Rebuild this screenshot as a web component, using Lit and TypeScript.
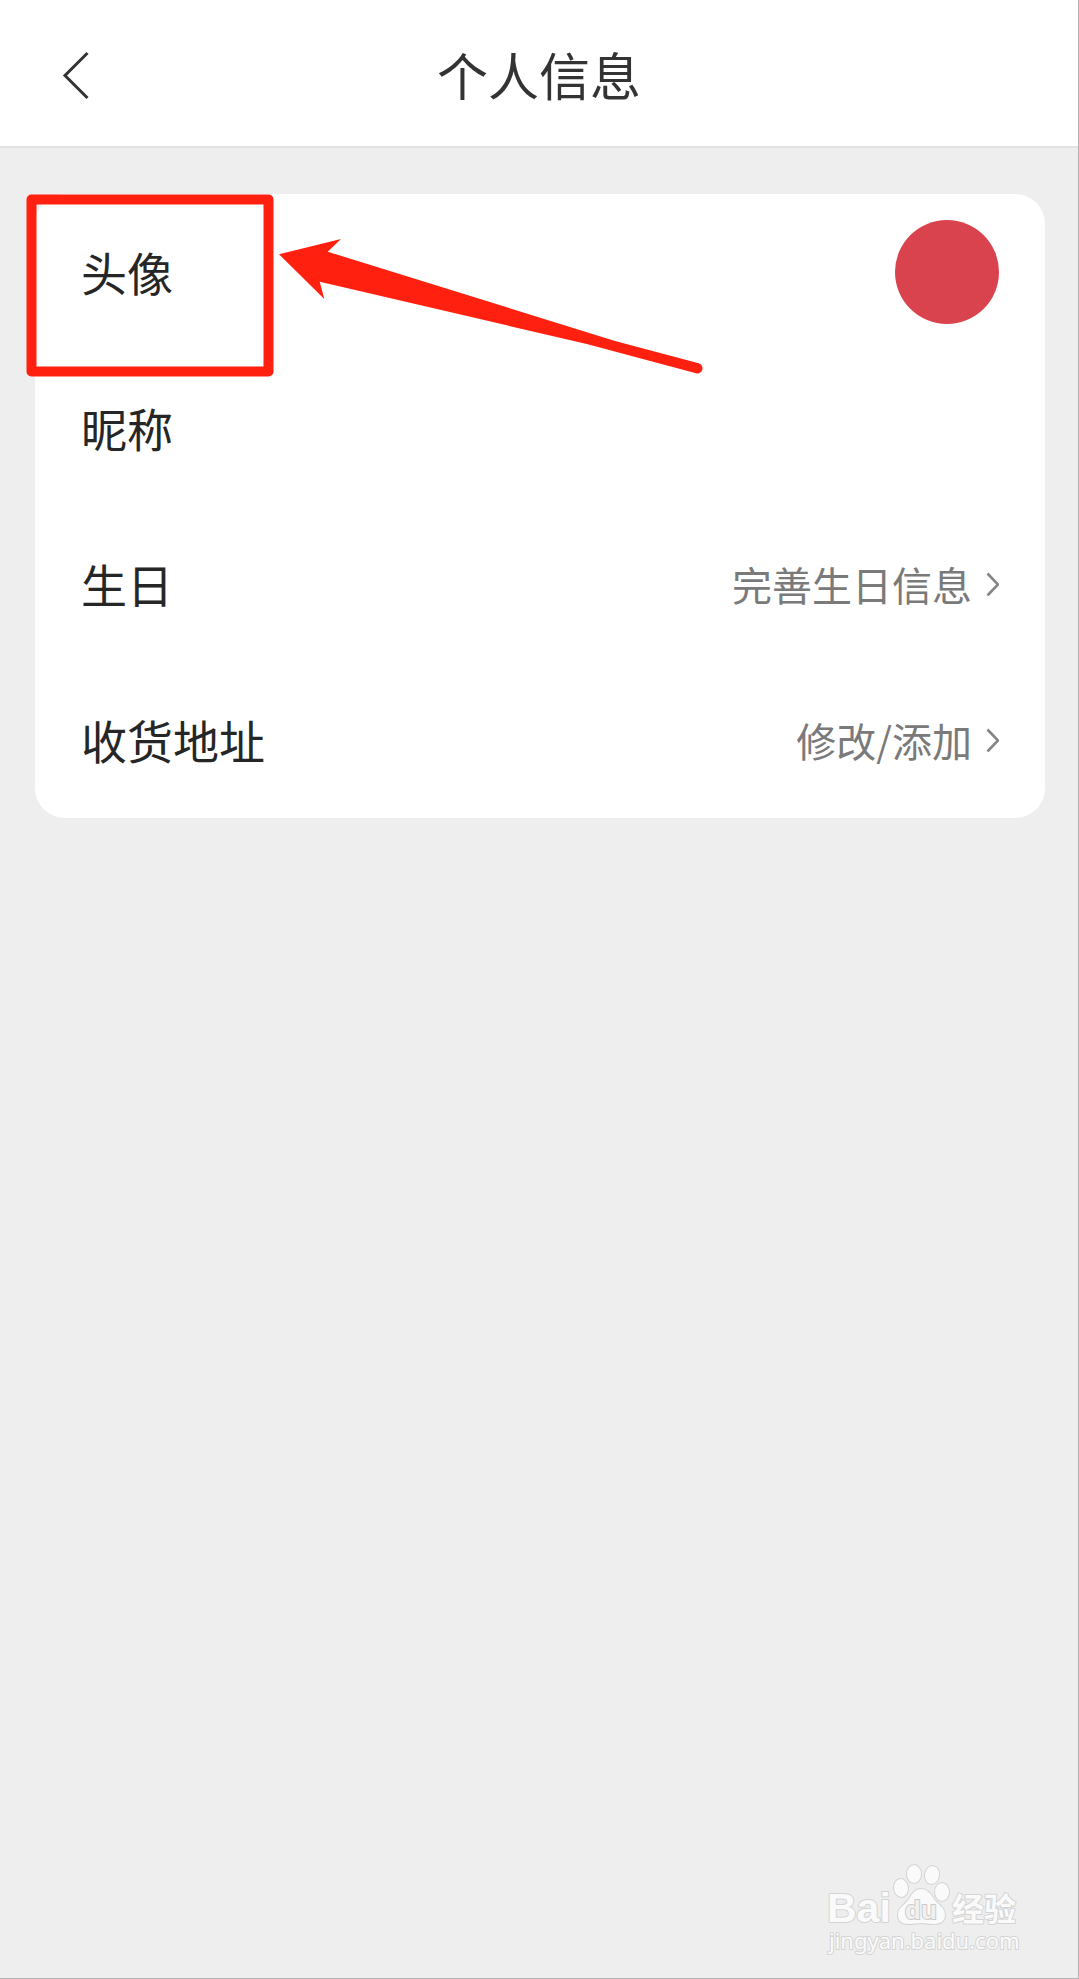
import { LitElement, html, css, svg, nothing } from "lit";
import { customElement, property } from "lit/decorators.js";

type Row = { label: string; value?: string; href?: string; avatar?: boolean };

const ROWS: Row[] = [
  { label: "头像", avatar: true },
  { label: "昵称" },
  { label: "生日", value: "完善生日信息", href: "#birthday" },
  { label: "收货地址", value: "修改/添加", href: "#address" },
];

@customElement("info-row")
class InfoRow extends LitElement {
  @property({ attribute: false }) row!: Row;

  static styles = css`
    :host {
      display: block;
    }
    .row {
      display: flex;
      align-items: center;
      justify-content: space-between;
      box-sizing: border-box;
      width: 100%;
      min-height: 156px;
      padding: 0 46px;
      border: 0;
      background: none;
      font: inherit;
      color: #262626;
      text-align: left;
      text-decoration: none;
    }
    .label {
      padding-bottom: 2px;
      font-size: 46px;
      line-height: 64px;
    }
    .value {
      display: flex;
      align-items: center;
      gap: 13px;
      font-size: 40px;
      line-height: 56px;
      color: #7a7a7a;
    }
    .chevron {
      width: 14px;
      height: 24px;
      fill: none;
      stroke: #858585;
      stroke-width: 2.6;
    }
    .avatar {
      width: 104px;
      height: 104px;
      border-radius: 50%;
      background: #d9434e;
    }
  `;

  render() {
    const { label, value, href, avatar } = this.row;
    const text = html`<span class="label">${label}</span>`;
    if (href) {
      return html`<a class="row" href=${href}>
        ${text}
        <span class="value">
          ${value}
          <svg class="chevron" viewBox="0 0 14 24" aria-hidden="true">
            <path d="M2.500 1.500L13 12.500L2.500 23.500" />
          </svg>
        </span>
      </a>`;
    }
    return html`<button class="row" type="button">
      ${text} ${avatar ? html`<span class="avatar"></span>` : nothing}
    </button>`;
  }
}

const TOES = [
  { cx: 74, cy: 28, rx: 7, ry: 9, turn: -6 },
  { cx: 87, cy: 14, rx: 7, ry: 9, turn: 0 },
  { cx: 105, cy: 15, rx: 7, ry: 9, turn: 10 },
  { cx: 115, cy: 32, rx: 7, ry: 9, turn: 0 },
];

@customElement("site-watermark")
class SiteWatermark extends LitElement {
  static styles = css`
    :host {
      display: block;
      width: 200px;
      height: 100px;
    }
    .mark {
      display: block;
      overflow: visible;
      fill: #fafafa;
      stroke: #d4d4d4;
      stroke-width: 2;
      stroke-linejoin: round;
      paint-order: stroke;
    }
    .latin {
      font: bold 41px "Liberation Sans", sans-serif;
    }
    .du {
      font: bold 26px "Liberation Sans", sans-serif;
      fill: #f0f0f0;
      stroke: #cacaca;
    }
    .han {
      font: bold 32px "Noto Sans CJK SC", sans-serif;
    }
    .site {
      font: 22px "Noto Sans", sans-serif;
    }
  `;

  render() {
    return html`<svg class="mark" width="200" height="100" viewBox="0 0 200 100" role="img" aria-label="Baidu 经验">
      <text class="latin" x="0" y="62">Bai</text>
      ${TOES.map(
        (t) =>
          svg`<ellipse cx=${t.cx} cy=${t.cy} rx=${t.rx} ry=${t.ry} transform="rotate(${t.turn} ${t.cx} ${t.cy})" />`,
      )}
      <path d="M94 29C100 29 104 34 107 39C110 44 118 47 118 55C118 62 112 64 106 64C101 64 98 63 94 63C90 63 87 64 82 64C75 64 71 61 71 55C71 47 79 44 82 39C85 34 88 29 94 29Z" />
      <text class="du" x="78" y="59">du</text>
      <text class="han" x="125" y="61">经验</text>
      <text class="site" x="2" y="89">jingyan.baidu.com</text>
    </svg>`;
  }
}

@customElement("app-root")
class AppRoot extends LitElement {
  static styles = css`
    :host {
      display: block;
      position: relative;
      box-sizing: border-box;
      min-height: 100vh;
      border-right: 1px solid #b4b4b4;
      border-bottom: 1px solid #b4b4b4;
      background: #eee;
      font-family: "Noto Sans CJK SC", sans-serif;
    }
    .header {
      display: grid;
      grid-template-columns: 1fr auto 1fr;
      align-items: center;
      box-sizing: border-box;
      height: 148px;
      padding: 2px 45px 0;
      border-bottom: 2px solid #e3e3e3;
      background: #fff;
    }
    .back {
      display: flex;
      justify-self: start;
      padding: 12px;
      border: 0;
      background: none;
    }
    .back-icon {
      width: 36px;
      height: 52px;
      fill: none;
      stroke: #333;
      stroke-width: 3;
    }
    .title {
      margin: 0;
      font-size: 51px;
      font-weight: 400;
      line-height: 72px;
      color: #333;
    }
    .content {
      padding: 46px 33px 46px 35px;
    }
    .card {
      position: relative;
      border-radius: 30px;
      background: #fff;
    }
    .callout {
      position: absolute;
      top: 0;
      left: -9px;
      overflow: visible;
      pointer-events: none;
    }
    .callout-box {
      fill: none;
      stroke: #ff2010;
      stroke-width: 10;
      stroke-linejoin: round;
    }
    .callout-arrow {
      fill: #ff2010;
    }
    .watermark {
      position: absolute;
      right: 51px;
      bottom: 18px;
    }
  `;

  render() {
    return html`
      <header class="header">
        <button class="back" type="button" aria-label="返回">
          <svg class="back-icon" viewBox="0 0 36 52" aria-hidden="true">
            <path d="M30.500 5L8 27.500L30.500 50" />
          </svg>
        </button>
        <h1 class="title">个人信息</h1>
      </header>
      <main class="content">
        <section class="card">
          ${ROWS.map((row) => html`<info-row .row=${row}></info-row>`)}
          <svg class="callout" width="680" height="184" viewBox="0 0 680 184" aria-hidden="true">
            <rect class="callout-box" x="5.500" y="5.500" width="237" height="172" />
            <path
              class="callout-arrow"
              d="M253 60.300L315 45L301.700 57.700L589 147L672.700 169.300A5 5 0 0 1 670 179.300L560.700 150L293.700 87.700L298.300 105Z"
            />
          </svg>
        </section>
      </main>
      <site-watermark class="watermark"></site-watermark>
    `;
  }
}
